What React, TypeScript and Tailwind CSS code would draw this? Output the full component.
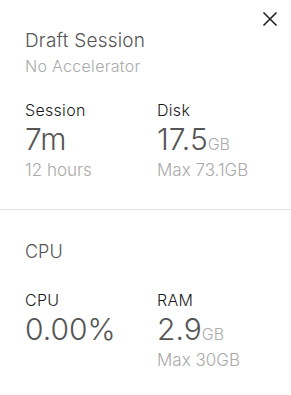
const Stat = ({ label, value, unit, sub }: { label: string; value: string; unit?: string; sub?: string }) => (
  <div className="flex flex-col">
    <span className="text-[16px] leading-[20px] font-light tracking-[0.3px] text-[#1a1a1a]">{label}</span>
    <span className="text-[30px] leading-[32px] font-light text-[#555] mt-[3px]">
      {value}
      {unit && <span className="text-[16px] leading-none font-light text-[#aaa]">{unit}</span>}
    </span>
    {sub && (
      <span className="text-[17px] leading-[20px] font-light text-[#aaa] mt-[5px]">{sub}</span>
    )}
  </div>
);

export default function App() {
  return (
    <div className="w-[291px] h-[395px] bg-white relative font-['Inter',sans-serif]">
      <button className="absolute left-[262px] top-[11px] text-[#222]">
        <svg width="16" height="16" viewBox="0 0 16 16" fill="none" stroke="currentColor" strokeWidth="1.6">
          <path d="M1.5 1.5 L14.5 14.5 M14.5 1.5 L1.5 14.5" />
        </svg>
      </button>
      <div className="pl-[25px] pt-[31px] h-[209px]">
        <div className="text-[19px] leading-[20px] font-light tracking-[0.2px] text-[#555]">Draft Session</div>
        <div className="text-[16px] leading-[16px] font-light tracking-[0.3px] text-[#aaa] mt-[7px]">
          No Accelerator
        </div>
        <div className="flex mt-[26px]">
          <div className="w-[132px]">
            <Stat label="Session" value="7m" sub="12 hours" />
          </div>
          <Stat label="Disk" value="17.5" unit="GB" sub="Max 73.1GB" />
        </div>
      </div>
      <div className="h-px bg-[#e3e3e3]" />
      <div className="pl-[25px] pt-[32px]">
        <div className="text-[18px] leading-[20px] font-light text-[#555]">CPU</div>
        <div className="flex mt-[28px]">
          <div className="w-[132px]">
            <Stat label="CPU" value="0.00%" />
          </div>
          <Stat label="RAM" value="2.9" unit="GB" sub="Max 30GB" />
        </div>
      </div>
    </div>
  );
}
